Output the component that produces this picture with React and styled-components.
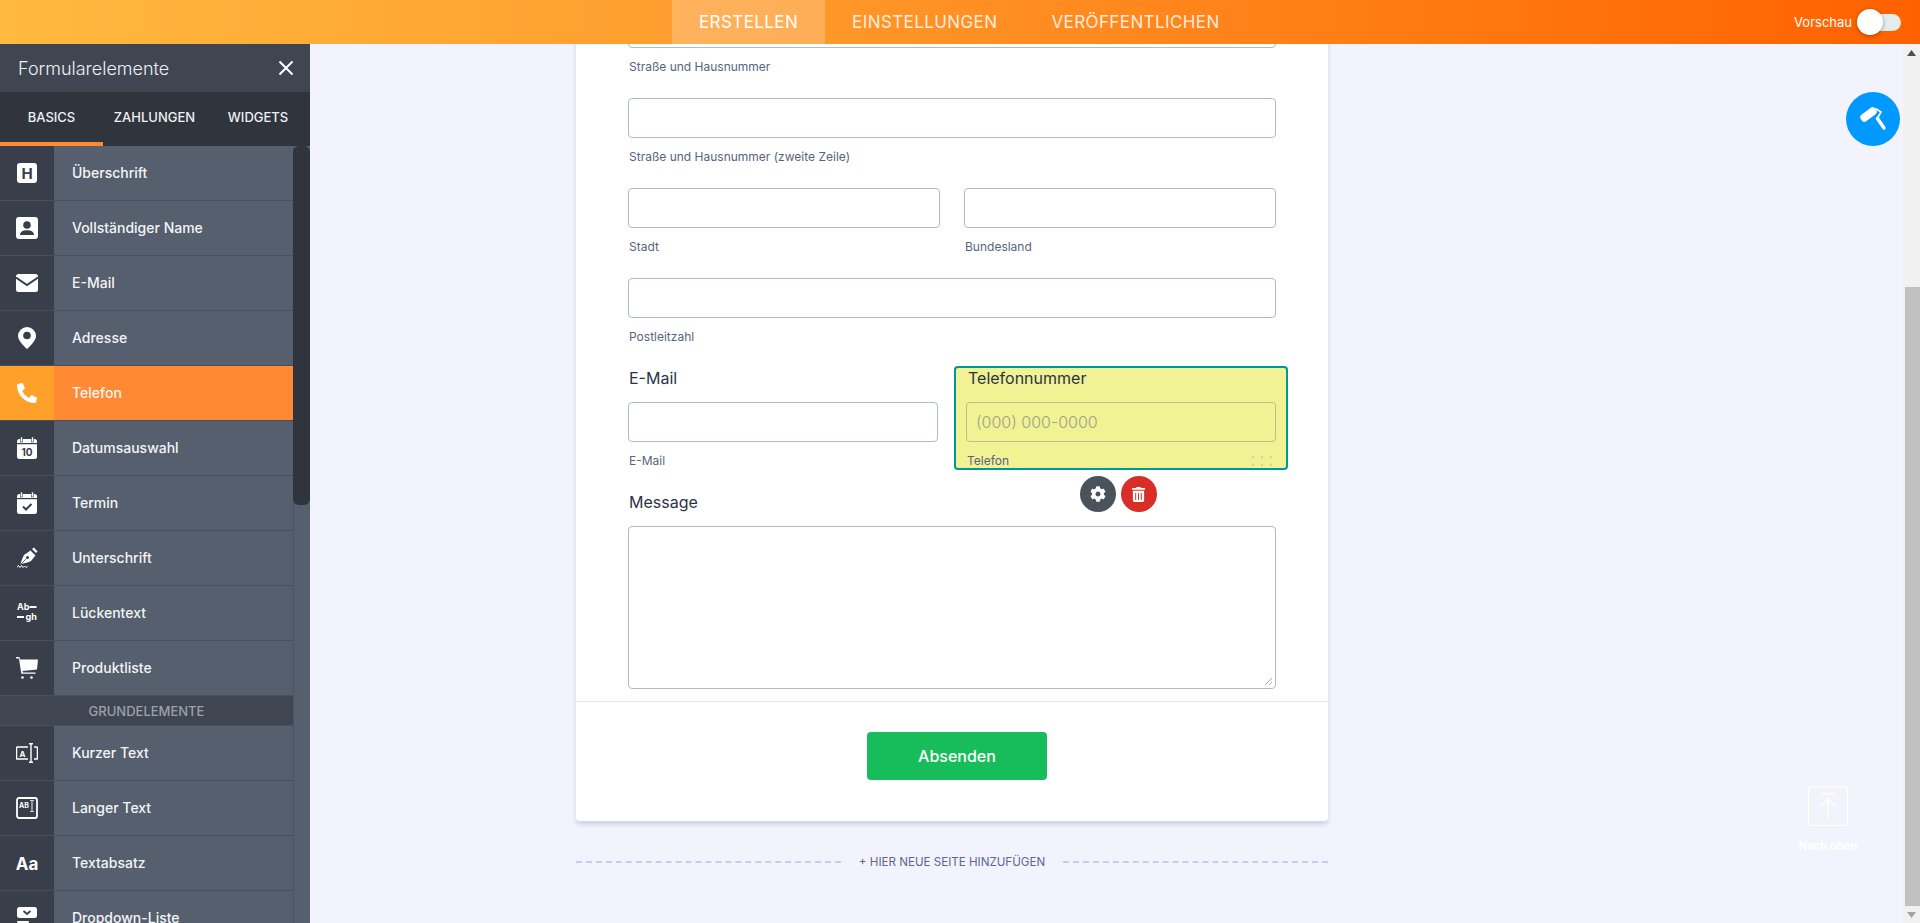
import React from "react";
import styled, { createGlobalStyle } from "styled-components";
import { FaPhoneAlt, FaCog, FaTrashAlt } from "react-icons/fa";

const Global = createGlobalStyle`
  html, body { margin: 0; padding: 0; height: 100%; overflow: hidden; }
  body { font-family: Inter, "Liberation Sans", sans-serif; background: #f3f3fd; }
  * { box-sizing: border-box; }
`;

const Page = styled.div`
  display: flex; flex-direction: column; height: 923px; overflow: hidden;
`;
const Header = styled.header`
  height: 44px; flex: none; display: flex; align-items: stretch; padding-left: 672px;
  background: linear-gradient(90deg, #ffb93f 0%, #ff9a2b 40%, #ff6100 100%);
`;
const NavTab = styled.div`
  display: flex; align-items: center; padding: 0 27px; font-size: 17px; letter-spacing: 0.4px;
  color: ${p => (p.$active ? "#fff" : "rgba(255,255,255,.85)")};
  background: ${p => (p.$active ? "rgba(255,255,255,.22)" : "transparent")};
`;
const PreviewGroup = styled.div`
  margin-left: auto; display: flex; align-items: center; padding-right: 19px; gap: 5px;
  color: #fff; font-size: 13px;
`;
const ToggleTrack = styled.div`
  position: relative; width: 44px; height: 17px; border-radius: 9px; background: #e6ebec;
`;
const ToggleKnob = styled.div`
  position: absolute; left: 0; top: -5px; width: 26px; height: 26px; border-radius: 50%;
  background: #fff; box-shadow: 0 1px 4px rgba(0,0,0,.35);
`;
const Body = styled.div`
  flex: 1; display: flex; min-height: 0;
`;
const Sidebar = styled.aside`
  width: 310px; flex: none; display: flex; flex-direction: column; background: #555f6e;
`;
const SideTitle = styled.div`
  height: 48px; flex: none; display: flex; align-items: center; justify-content: space-between;
  padding: 0 16px 0 18px; color: #eef0f2; font-size: 18px; font-weight: 300;
  background: #3f4652;
`;
const SideTabs = styled.div`
  height: 54px; flex: none; display: grid; grid-template-columns: 103px 103px 104px; background: #2f343d;
`;
const SideTab = styled.div`
  display: flex; align-items: center; justify-content: center;
  font-size: 13px; font-weight: 500; color: #eef0f2;
  border-bottom: 4px solid ${p => (p.$active ? "#ff8a33" : "transparent")};
`;
const SideBody = styled.div`
  flex: 1; display: flex; min-height: 0; overflow: hidden;
`;
const SideList = styled.div`
  width: 293px; flex: none;
`;
const SideTrack = styled.div`
  width: 17px; flex: none; border-left: 1px solid #495361;
`;
const SideThumb = styled.div`
  width: 17px; margin-left: -1px; height: 359px; background: #2f343d; border-radius: 6px;
`;
const ItemRow = styled.div`
  height: 55px; display: flex; align-items: stretch;
  background: ${p => (p.$active ? "#ff8a33" : "#555f6e")};
  border-bottom: 1px solid #465160;
  color: #f3f4f5; font-size: 14px; font-weight: 500;
`;
const ItemIcon = styled.div`
  width: 54px; flex: none; display: flex; align-items: center; justify-content: center; color: #fff;
  background: ${p => (p.$active ? "#ffa02b" : "#383f4b")};
`;
const ItemLabel = styled.div`
  display: flex; align-items: center; padding: 0 0 2px 18px;
`;
const GroupHeading = styled.div`
  height: 30px; display: flex; align-items: center; justify-content: center;
  background: #3f4652; color: #9ba1a9; font-size: 13px; font-weight: 500;
  border-bottom: 1px solid #465160;
`;
const Main = styled.main`
  position: relative; flex: 1; min-width: 0; overflow: hidden; padding-left: 266px; background: #f3f3fd;
`;
const Card = styled.div`
  width: 752px; background: #fff; border-radius: 0 0 4px 4px;
  box-shadow: 0 4px 4px rgba(87,114,140,.22);
`;
const CardFields = styled.div`
  padding: 0 52px;
`;
const TextInput = styled.div`
  height: 40px; border: 1px solid #b3b7c6; border-radius: 4px; background: #fff;
  display: flex; align-items: center; padding: 0 9px; font-size: 16px; color: #8d93a0;
`;
const ClippedInput = styled(TextInput)`
  margin-top: -36px;
`;
const PhoneInput = styled(TextInput)`
  width: 310px; background: transparent; border-color: #bcbf86; color: #9aa38a; font-weight: 300;
`;
const SubLabel = styled.div`
  margin-top: 11px; padding-left: 1px; font-size: 12px; line-height: 16px; color: #57647e; height: 16px;
`;
const Field = styled.div`
  margin-bottom: 23px;
`;
const TwoCol = styled.div`
  display: grid; grid-template-columns: 312px 312px; column-gap: 24px;
`;
const ContactRow = styled.div`
  display: grid; grid-template-columns: 310px 334px; column-gap: 16px; height: 104px;
  margin: 21px -12px 0 0;
`;
const ContactCell = styled.div`
  position: relative; height: 104px;
`;
const PhoneCell = styled(ContactCell)`
  padding: 0 12px; background: #f1f293; border-radius: 4px; box-shadow: inset 0 0 0 2px #00979a;
`;
const FieldTitle = styled.div`
  height: 24px; line-height: 24px; padding-left: ${p => p.$indent || 1}px; margin-bottom: 12px;
  font-size: 16px; color: #2c3345;
`;
const GripDots = styled.div`
  position: absolute; right: 16px; bottom: 4px; display: grid;
  grid-template-columns: repeat(3, 2px); grid-auto-rows: 2px; gap: 6px 7px;
`;
const Dot = styled.span`
  background: #d3d69a;
`;
const ActionBar = styled.div`
  position: absolute; top: 110px; left: 0; right: 0; display: flex; justify-content: center; gap: 5px;
  padding-right: 6px; z-index: 2;
`;
const RoundAction = styled.div`
  width: 36px; height: 36px; border-radius: 50%; display: flex; align-items: center; justify-content: center;
  color: #fff; background: ${p => p.$bg};
`;
const MessageField = styled.div`
  margin-top: 20px; padding-bottom: 12px;
`;
const TextArea = styled.div`
  position: relative; height: 163px; border: 1px solid #b3b7c6; border-radius: 4px; background: #fff;
`;
const ResizeGrip = styled.svg`
  position: absolute; right: 2px; bottom: 2px; width: 9px; height: 9px;
`;
const SubmitSection = styled.div`
  border-top: 1px solid #e6e6f0; padding: 30px 0 41px 10px; display: flex; justify-content: center;
`;
const SubmitButton = styled.div`
  width: 180px; height: 48px; border-radius: 4px; background: #18bd5b; color: #fff;
  display: flex; align-items: center; justify-content: center; font-size: 16px; font-weight: 500;
`;
const AddPage = styled.div`
  width: 752px; margin-top: 33px; height: 16px; display: flex; align-items: center; gap: 18px;
  color: #5f6591; font-size: 11.6px; line-height: 16px; white-space: nowrap;
`;
const DashLine = styled.div`
  flex: 1; border-top: 2px dashed #cacde9;
`;
const PaintButton = styled.div`
  position: absolute; right: 3px; top: 48px; width: 54px; height: 54px; border-radius: 50%;
  background: #0099ff; display: flex; align-items: center; justify-content: center;
`;
const BackToTop = styled.div`
  position: absolute; top: 742px; right: 35px; width: 80px; display: flex; flex-direction: column; align-items: center;
  gap: 13px; color: #fff; font-size: 11.2px; font-weight: 700;
`;
const TopBox = styled.div`
  width: 40px; height: 40px; border: 1.5px solid #fff; border-radius: 3px; display: flex; align-items: center; justify-content: center;
`;
const PageScroll = styled.div`
  width: 17px; flex: none; display: flex; flex-direction: column; background: #f1f1f1;
`;
const ScrollArrow = styled.div`
  height: 17px; flex: none; display: flex; align-items: center; justify-content: center;
`;
const ScrollThumb = styled.div`
  flex: 1; margin: 226px 0 0 2px; background: #c1c1c1;
`;

const Svg = ({ children, w = 22, h = 22 }) => (
  <svg width={w} height={h} viewBox={`0 0 ${w} ${h}`} fill="#fff">{children}</svg>
);
const DARK = "#383f4b";
const glyph = { fontFamily: "Inter, sans-serif", fontWeight: 700 };

const icons = {
  h: <Svg w={20} h={20}><rect width="20" height="20" rx="3" /><text x="10" y="15.5" textAnchor="middle" fontSize="15" fill={DARK} style={glyph}>H</text></Svg>,
  person: <Svg><rect width="22" height="22" rx="3" /><circle cx="11" cy="8" r="3.8" fill={DARK} /><path d="M4 18c0-3.6 3.4-4.8 7-4.8s7 1.2 7 4.8z" fill={DARK} /></Svg>,
  mail: <Svg h={18}><rect width="22" height="18" rx="2.5" /><path d="M0 3.5l11 7.5 11-7.5" fill="none" stroke={DARK} strokeWidth="2" /></Svg>,
  pin: <Svg w={18}><path d="M9 0a9 9 0 0 0-9 9c0 5.5 9 13 9 13s9-7.5 9-13a9 9 0 0 0-9-9z" /><circle cx="9" cy="8.5" r="3.8" fill={DARK} /></Svg>,
  phone: <FaPhoneAlt size={20} />,
  calendarNum: <Svg w={20}><rect y="2" width="20" height="20" rx="2.5" /><rect x="3.5" width="2" height="5" stroke={DARK} strokeWidth=".6" /><rect x="14.5" width="2" height="5" stroke={DARK} strokeWidth=".6" /><rect y="6" width="20" height="1.2" fill={DARK} /><text x="10" y="19" textAnchor="middle" fontSize="10" fill={DARK} style={glyph}>10</text></Svg>,
  calendarCheck: <Svg w={20}><rect y="2" width="20" height="20" rx="2.5" /><rect x="3.5" width="2" height="5" stroke={DARK} strokeWidth=".6" /><rect x="14.5" width="2" height="5" stroke={DARK} strokeWidth=".6" /><rect y="6" width="20" height="1.2" fill={DARK} /><path d="M6 14.5l3 3 5.5-5.5" fill="none" stroke={DARK} strokeWidth="2" /></Svg>,
  pen: <Svg w={21}>
    <path d="M15 2l2-1.500 3.500 4-1.500 1.500z" />
    <path d="M13.500 3.500l5 5L14 14c-4 2-7.500 2-10.500 3.500.5-2.500 1.500-5.500 3.500-9.500z" />
    <circle cx="10.500" cy="10.500" r="1.500" fill={DARK} />
    <path d="M3.500 17.500l6-6" stroke={DARK} strokeWidth=".8" />
    <path d="M0 20.500l1.500-2 1.500 2 1.500-2 1.500 2 1.500-1.500 1.500 1.500 1.500-1" fill="none" stroke="#fff" strokeWidth="1" />
  </Svg>,
  blank: <Svg w={20}><text x="0" y="8" fontSize="9" style={glyph}>Ab</text><rect x="12.500" y="4" width="7" height="2" /><rect y="14" width="7" height="2" /><text x="8.500" y="18" fontSize="9" style={glyph}>gh</text></Svg>,
  cart: <Svg><path d="M0 0h3.200l1 2.600H22l-1 10-14.500 1.500 .3 1.500H19.500v1.200H5.300L3 1.400H0z" /><circle cx="6.500" cy="20.500" r="1.300" /><circle cx="15.500" cy="20.500" r="1.300" /></Svg>,
  shortText: <Svg h={20}><path d="M12 4H1.500a1 1 0 0 0-1 1v10a1 1 0 0 0 1 1H12M18 4h2.500a1 1 0 0 1 1 1v10a1 1 0 0 1-1 1H18" fill="none" stroke="#fff" strokeWidth="1.600" /><path d="M13 .800h4M13 19.200h4M15 1v18" fill="none" stroke="#fff" strokeWidth="1.400" /><text x="6.500" y="13.500" textAnchor="middle" fontSize="8" style={glyph}>A</text></Svg>,
  longText: <Svg><rect x="1" y="1" width="20" height="20" rx="2" fill="none" stroke="#fff" strokeWidth="1.800" /><text x="3" y="11" fontSize="7" style={glyph}>AB</text><path d="M14 3.500h4M14 14.500h4M16 3.500v11" fill="none" stroke="#d0d3d8" strokeWidth="1.200" /></Svg>,
  para: <Svg h={18}><text x="11" y="15.500" textAnchor="middle" fontSize="17" style={glyph}>Aa</text></Svg>,
  dropdown: <Svg w={20}><rect y="0" width="20" height="11" rx="2.500" /><path d="M6.500 4l3.500 3 3.500-3" fill="none" stroke={DARK} strokeWidth="1.800" /><rect y="14" width="12" height="2" rx="1" /><rect y="19" width="12" height="2" rx="1" /></Svg>,
};

const basics = [
  ["h", "Überschrift"], ["person", "Vollständiger Name"], ["mail", "E-Mail"], ["pin", "Adresse"],
  ["phone", "Telefon", true], ["calendarNum", "Datumsauswahl"], ["calendarCheck", "Termin"],
  ["pen", "Unterschrift"], ["blank", "Lückentext"], ["cart", "Produktliste"],
];
const general = [
  ["shortText", "Kurzer Text"], ["longText", "Langer Text"], ["para", "Textabsatz"], ["dropdown", "Dropdown-Liste"],
];

const Item = ({ icon, label, active }) => (
  <ItemRow $active={active}>
    <ItemIcon $active={active}>{icons[icon]}</ItemIcon>
    <ItemLabel>{label}</ItemLabel>
  </ItemRow>
);

export default function App() {
  return (
    <Page>
      <Global />
      <Header>
        <NavTab $active>ERSTELLEN</NavTab>
        <NavTab>EINSTELLUNGEN</NavTab>
        <NavTab>VERÖFFENTLICHEN</NavTab>
        <PreviewGroup>
          Vorschau
          <ToggleTrack><ToggleKnob /></ToggleTrack>
        </PreviewGroup>
      </Header>
      <Body>
        <Sidebar>
          <SideTitle>
            Formularelemente
            <svg width="16" height="16" viewBox="0 0 16 16"><path d="M1.500 1.500l13 13M14.500 1.500l-13 13" stroke="#fff" strokeWidth="2" /></svg>
          </SideTitle>
          <SideTabs>
            <SideTab $active>BASICS</SideTab>
            <SideTab>ZAHLUNGEN</SideTab>
            <SideTab>WIDGETS</SideTab>
          </SideTabs>
          <SideBody>
            <SideList>
              {basics.map(([i, l, a]) => <Item key={l} icon={i} label={l} active={a} />)}
              <GroupHeading>GRUNDELEMENTE</GroupHeading>
              {general.map(([i, l]) => <Item key={l} icon={i} label={l} />)}
            </SideList>
            <SideTrack><SideThumb /></SideTrack>
          </SideBody>
        </Sidebar>
        <Main>
          <Card>
            <CardFields>
              <Field>
                <ClippedInput />
                <SubLabel>Straße und Hausnummer</SubLabel>
              </Field>
              <Field>
                <TextInput />
                <SubLabel>Straße und Hausnummer (zweite Zeile)</SubLabel>
              </Field>
              <Field>
                <TwoCol>
                  <div><TextInput /><SubLabel>Stadt</SubLabel></div>
                  <div><TextInput /><SubLabel>Bundesland</SubLabel></div>
                </TwoCol>
              </Field>
              <div>
                <TextInput />
                <SubLabel>Postleitzahl</SubLabel>
              </div>
              <ContactRow>
                <ContactCell>
                  <FieldTitle>E-Mail</FieldTitle>
                  <TextInput />
                  <SubLabel>E-Mail</SubLabel>
                </ContactCell>
                <PhoneCell>
                  <FieldTitle $indent={2}>Telefonnummer</FieldTitle>
                  <PhoneInput>(000) 000-0000</PhoneInput>
                  <SubLabel>Telefon</SubLabel>
                  <GripDots>{Array.from({ length: 6 }, (_, i) => <Dot key={i} />)}</GripDots>
                  <ActionBar>
                    <RoundAction $bg="#4a525c"><FaCog size={16} /></RoundAction>
                    <RoundAction $bg="#d92d27"><FaTrashAlt size={15} /></RoundAction>
                  </ActionBar>
                </PhoneCell>
              </ContactRow>
              <MessageField>
                <FieldTitle>Message</FieldTitle>
                <TextArea>
                  <ResizeGrip viewBox="0 0 9 9"><path d="M8 1L1 8M8 5L5 8" stroke="#a9adb8" strokeWidth="1" /></ResizeGrip>
                </TextArea>
              </MessageField>
            </CardFields>
            <SubmitSection>
              <SubmitButton>Absenden</SubmitButton>
            </SubmitSection>
          </Card>
          <AddPage>
            <DashLine />
            + HIER NEUE SEITE HINZUFÜGEN
            <DashLine />
          </AddPage>
          <PaintButton>
            <svg width="50" height="50" viewBox="0 0 50 50" fill="#fff">
              <rect x="11.500" y="16.500" width="18" height="8" rx="3.500" transform="rotate(-37 20.500 20.500)" />
              <path d="M27.500 14.500l5.500 3.500-3.500 6" fill="none" stroke="#fff" strokeWidth="1.600" />
              <path d="M29.500 24.500l6.500 9.500" fill="none" stroke="#fff" strokeWidth="3.400" strokeLinecap="round" />
            </svg>
          </PaintButton>
          <BackToTop>
            <TopBox>
              <svg width="16" height="26" viewBox="0 0 16 26" fill="none" stroke="#fff" strokeWidth="1.500"><path d="M1 1h14M8 6v19M1 13l7-7 7 7" /></svg>
            </TopBox>
            Nach oben
          </BackToTop>
        </Main>
        <PageScroll>
          <ScrollArrow><svg width="9" height="6" viewBox="0 0 9 6"><path d="M4.500 0L9 6H0z" fill="#505050" /></svg></ScrollArrow>
          <ScrollThumb />
          <ScrollArrow><svg width="9" height="6" viewBox="0 0 9 6"><path d="M4.500 6L9 0H0z" fill="#a3a3a3" /></svg></ScrollArrow>
        </PageScroll>
      </Body>
    </Page>
  );
}
